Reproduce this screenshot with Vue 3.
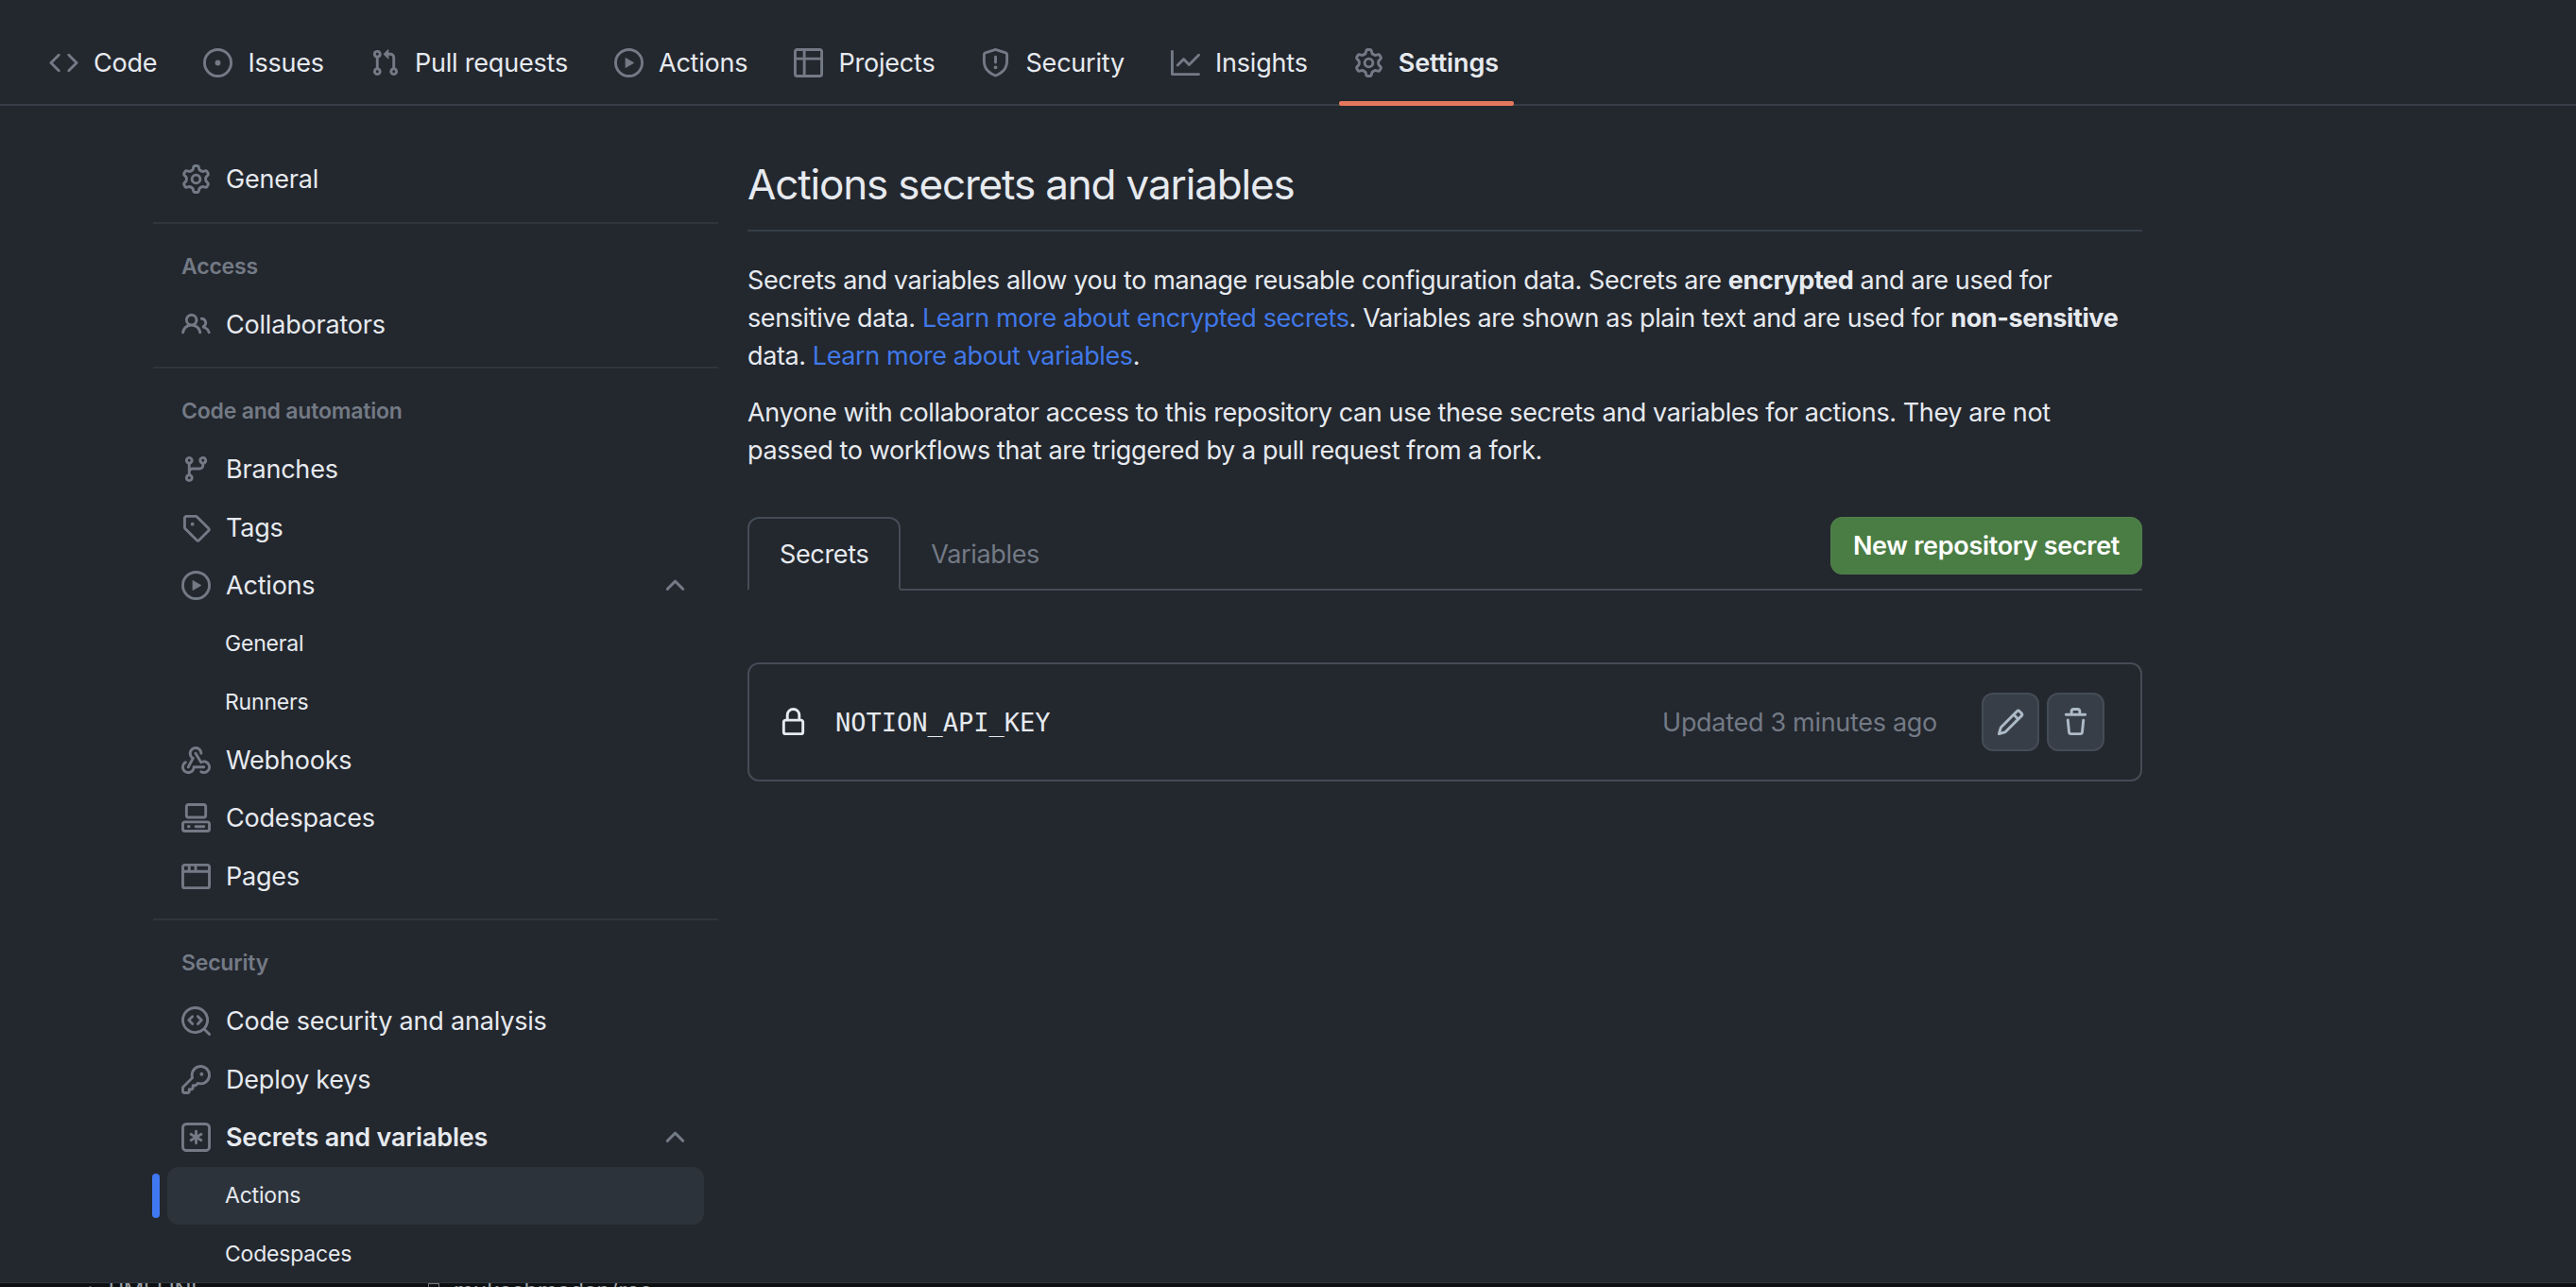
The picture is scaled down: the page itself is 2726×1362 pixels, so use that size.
<template>
  <div class="page">
    <nav class="topnav">
      <a v-for="tab in navTabs" :key="tab.label" class="nav-item" :class="{ selected: tab.selected }">
        <svg class="icon" viewBox="0 0 16 16"><path v-for="d in icons[tab.icon]" :key="d" :d="d" /></svg>
        <span>{{ tab.label }}</span>
      </a>
    </nav>

    <div class="body">
      <aside class="sidebar">
        <template v-for="(item, i) in sideItems" :key="i">
          <div v-if="item.type === 'divider'" class="side-divider"></div>
          <div v-else-if="item.type === 'heading'" class="side-heading">{{ item.label }}</div>
          <a v-else class="side-row" :class="{ sub: item.sub, active: item.active, strong: item.strong }">
            <svg v-if="item.icon" class="icon" viewBox="0 0 16 16"><path v-for="d in icons[item.icon]" :key="d" :d="d" /></svg>
            <span class="side-label">{{ item.label }}</span>
            <svg v-if="item.open" class="icon chevron" viewBox="0 0 16 16"><path :d="icons.chevron[0]" /></svg>
          </a>
        </template>
      </aside>

      <main class="content">
        <h1 class="title">Actions secrets and variables</h1>
        <p class="para first">
          Secrets and variables allow you to manage reusable configuration data. Secrets are <b>encrypted</b> and are used for
          sensitive data. <a class="link">Learn more about encrypted secrets</a>. Variables are shown as plain text and are used for <b>non-sensitive</b>
          data. <a class="link">Learn more about variables</a>.
        </p>
        <p class="para">
          Anyone with collaborator access to this repository can use these secrets and variables for actions. They are not
          passed to workflows that are triggered by a pull request from a fork.
        </p>

        <div class="tabs">
          <a class="tab current">Secrets</a>
          <a class="tab">Variables</a>
          <button class="new-btn">New repository secret</button>
        </div>

        <div class="secret-box">
          <svg class="icon lock" viewBox="0 0 16 16"><path :d="icons.lock[0]" /></svg>
          <code class="secret-name">NOTION_API_KEY</code>
          <span class="updated">Updated 3 minutes ago</span>
          <button class="icon-btn"><svg class="icon" viewBox="0 0 16 16"><path :d="icons.pencil[0]" /></svg></button>
          <button class="icon-btn"><svg class="icon" viewBox="0 0 16 16"><path :d="icons.trash[0]" /></svg></button>
        </div>
      </main>
    </div>

    <div class="peek">
      <span class="peek-left">&lt;</span>
      <span class="peek-title">TIMELINE</span>
      <span class="peek-box"></span>
      <span class="peek-right">mukeshmadan/ros</span>
    </div>
  </div>
</template>

<script setup>
const circle = 'M8 0a8 8 0 1 1 0 16A8 8 0 0 1 8 0ZM1.5 8a6.5 6.5 0 1 0 13 0 6.5 6.5 0 0 0-13 0Z'
const gear = 'M8 0a8.2 8.2 0 0 1 .701.031C9.444.095 9.99.645 10.16 1.29l.288 1.107c.018.066.079.158.212.224.231.114.454.243.668.386.123.082.233.09.299.071l1.103-.303c.644-.176 1.392.021 1.82.63.27.385.506.792.704 1.218.315.675.111 1.422-.364 1.891l-.814.806c-.049.048-.098.147-.088.294.016.257.016.515 0 .772-.01.147.038.246.088.294l.814.806c.475.469.679 1.216.364 1.891a7.977 7.977 0 0 1-.704 1.217c-.428.61-1.176.807-1.82.63l-1.102-.302c-.067-.019-.177-.011-.3.071a5.909 5.909 0 0 1-.668.386c-.133.066-.194.158-.211.224l-.29 1.106c-.168.646-.715 1.196-1.458 1.26a8.006 8.006 0 0 1-1.402 0c-.743-.064-1.289-.614-1.458-1.26l-.289-1.106c-.018-.066-.079-.158-.212-.224a5.738 5.738 0 0 1-.668-.386c-.123-.082-.233-.09-.299-.071l-1.103.303c-.644.176-1.392-.021-1.82-.63a8.12 8.12 0 0 1-.704-1.218c-.315-.675-.111-1.422.363-1.891l.815-.806c.05-.048.098-.147.088-.294a6.214 6.214 0 0 1 0-.772c.01-.147-.038-.246-.088-.294l-.815-.806C.635 6.045.431 5.298.746 4.623a7.92 7.92 0 0 1 .704-1.217c.428-.61 1.176-.807 1.82-.63l1.102.302c.067.019.177.011.3-.071.214-.143.437-.272.668-.386.133-.066.194-.158.211-.224l.29-1.106C6.009.645 6.556.095 7.299.03 7.53.01 7.764 0 8 0Zm-.571 1.525c-.036.003-.108.036-.137.146l-.289 1.105c-.147.561-.549.967-.998 1.189-.173.086-.34.183-.5.29-.417.278-.97.423-1.529.27l-1.103-.303c-.109-.03-.175.016-.195.045-.22.312-.412.644-.573.99-.014.031-.021.11.059.19l.815.806c.411.406.562.957.53 1.456a4.709 4.709 0 0 0 0 .582c.032.499-.119 1.05-.53 1.456l-.815.806c-.081.08-.073.159-.059.19.162.346.353.677.573.989.02.03.085.076.195.046l1.102-.303c.56-.153 1.113-.008 1.53.27.161.107.328.204.501.29.447.222.85.629.997 1.189l.289 1.105c.029.109.101.143.137.146a6.6 6.6 0 0 0 1.142 0c.036-.003.108-.036.137-.146l.289-1.105c.147-.561.549-.967.998-1.189.173-.086.34-.183.5-.29.417-.278.97-.423 1.529-.27l1.103.303c.109.029.175-.016.195-.045.22-.313.411-.644.573-.99.014-.031.021-.11-.059-.19l-.815-.806c-.411-.406-.562-.957-.53-1.456a4.709 4.709 0 0 0 0-.582c-.032-.499.119-1.05.53-1.456l.815-.806c.081-.08.073-.159.059-.19a6.464 6.464 0 0 0-.573-.989c-.02-.03-.085-.076-.195-.046l-1.102.303c-.56.153-1.113.008-1.53-.27a4.44 4.44 0 0 0-.501-.29c-.447-.222-.85-.629-.997-1.189l-.289-1.105c-.029-.11-.101-.143-.137-.146a6.6 6.6 0 0 0-1.142 0ZM11 8a3 3 0 1 1-6 0 3 3 0 0 1 6 0ZM9.5 8a1.5 1.5 0 1 0-3.001.001A1.5 1.5 0 0 0 9.5 8Z'
const play = 'M8 0a8 8 0 1 1 0 16A8 8 0 0 1 8 0ZM1.5 8a6.5 6.5 0 1 0 13 0 6.5 6.5 0 0 0-13 0Zm4.879-2.773 4.264 2.559a.25.25 0 0 1 0 .428l-4.264 2.559A.25.25 0 0 1 6 10.559V5.442a.25.25 0 0 1 .379-.215Z'

const icons = {
  code: ['m11.28 3.22 4.25 4.25a.75.75 0 0 1 0 1.06l-4.25 4.25a.749.749 0 0 1-1.275-.326.749.749 0 0 1 .215-.734L13.94 8l-3.72-3.72a.749.749 0 0 1 .326-1.275.749.749 0 0 1 .734.215Zm-6.56 0a.751.751 0 0 1 1.042.018.751.751 0 0 1 .018 1.042L2.06 8l3.72 3.72a.749.749 0 0 1-.326 1.275.749.749 0 0 1-.734-.215L.47 8.53a.75.75 0 0 1 0-1.06Z'],
  issue: ['M8 9.5a1.5 1.5 0 1 0 0-3 1.5 1.5 0 0 0 0 3Z', circle],
  pull: ['M1.5 3.25a2.25 2.25 0 1 1 3 2.122v5.256a2.251 2.251 0 1 1-1.5 0V5.372A2.25 2.25 0 0 1 1.5 3.25Zm5.677-.177L9.573.677A.25.25 0 0 1 10 .854V2.5h1A2.5 2.5 0 0 1 13.5 5v5.628a2.251 2.251 0 1 1-1.5 0V5a1 1 0 0 0-1-1h-1v1.646a.25.25 0 0 1-.427.177L7.177 3.427a.25.25 0 0 1 0-.354ZM3.75 2.5a.75.75 0 1 0 0 1.5.75.75 0 0 0 0-1.5Zm0 9.5a.75.75 0 1 0 0 1.5.75.75 0 0 0 0-1.5Zm8.25.75a.75.75 0 1 0 1.5 0 .75.75 0 0 0-1.5 0Z'],
  play: [play],
  table: ['M0 1.75C0 .784.784 0 1.75 0h12.5C15.216 0 16 .784 16 1.75v12.5A1.75 1.75 0 0 1 14.25 16H1.75A1.75 1.75 0 0 1 0 14.25ZM6.5 6.5v8h7.75a.25.25 0 0 0 .25-.25V6.5Zm8-1.5V1.75a.25.25 0 0 0-.25-.25H6.5V5Zm-13 1.5v7.75c0 .138.112.25.25.25H5v-8ZM5 5V1.5H1.75a.25.25 0 0 0-.25.25V5Z'],
  shield: ['M7.467.133a1.748 1.748 0 0 1 1.066 0l5.25 1.68A1.75 1.75 0 0 1 15 3.48V7c0 1.566-.32 3.182-1.303 4.682-.983 1.498-2.585 2.813-5.032 3.855a1.697 1.697 0 0 1-1.33 0c-2.447-1.042-4.049-2.357-5.032-3.855C1.32 10.182 1 8.566 1 7V3.48a1.75 1.75 0 0 1 1.217-1.667Zm.61 1.429a.25.25 0 0 0-.153 0l-5.25 1.68a.25.25 0 0 0-.174.238V7c0 1.358.275 2.666 1.057 3.86.784 1.194 2.121 2.34 4.366 3.297a.196.196 0 0 0 .154 0c2.245-.956 3.582-2.104 4.366-3.298C13.225 9.666 13.5 8.36 13.5 7V3.48a.251.251 0 0 0-.174-.237l-5.25-1.68ZM8.75 4.75v3a.75.75 0 0 1-1.5 0v-3a.75.75 0 0 1 1.5 0ZM9 10.5a1 1 0 1 1-2 0 1 1 0 0 1 2 0Z'],
  graph: ['M1.5 1.75V13.5h13.75a.75.75 0 0 1 0 1.5H.75a.75.75 0 0 1-.75-.75V1.75a.75.75 0 0 1 1.5 0Zm14.28 2.53-5.25 5.25a.75.75 0 0 1-1.06 0L7 7.06 4.28 9.78a.751.751 0 0 1-1.042-.018.751.751 0 0 1-.018-1.042l3.25-3.25a.75.75 0 0 1 1.06 0L10 7.94l4.72-4.72a.751.751 0 0 1 1.042.018.751.751 0 0 1 .018 1.042Z'],
  gear: [gear],
  people: ['M2 5.5a3.5 3.5 0 1 1 5.898 2.549 5.508 5.508 0 0 1 3.034 4.084.75.75 0 1 1-1.482.235 4 4 0 0 0-7.9 0 .75.75 0 0 1-1.482-.236A5.507 5.507 0 0 1 3.102 8.05 3.493 3.493 0 0 1 2 5.5ZM11 4a3.001 3.001 0 0 1 2.22 5.018 5.01 5.01 0 0 1 2.56 3.012.749.749 0 0 1-.885.954.752.752 0 0 1-.549-.514 3.507 3.507 0 0 0-2.522-2.372.75.75 0 0 1-.574-.73v-.352a.75.75 0 0 1 .416-.672A1.5 1.5 0 0 0 11 5.5.75.75 0 0 1 11 4Zm-5.5-.5a2 2 0 1 0-.001 3.999A2 2 0 0 0 5.5 3.5Z'],
  branch: ['M9.5 3.25a2.25 2.25 0 1 1 3 2.122V6A2.5 2.5 0 0 1 10 8.5H6a1 1 0 0 0-1 1v1.128a2.251 2.251 0 1 1-1.5 0V5.372a2.25 2.25 0 1 1 1.5 0v1.836A2.493 2.493 0 0 1 6 7h4a1 1 0 0 0 1-1v-.628A2.25 2.25 0 0 1 9.5 3.25Zm-6 0a.75.75 0 1 0 1.5 0 .75.75 0 0 0-1.5 0Zm8.25-.75a.75.75 0 1 0 0 1.5.75.75 0 0 0 0-1.5ZM4.25 12a.75.75 0 1 0 0 1.5.75.75 0 0 0 0-1.5Z'],
  tag: ['M1 7.775V2.75C1 1.784 1.784 1 2.75 1h5.025c.464 0 .91.184 1.238.513l6.25 6.25a1.75 1.75 0 0 1 0 2.474l-5.026 5.026a1.75 1.75 0 0 1-2.474 0l-6.25-6.25A1.75 1.75 0 0 1 1 7.775Zm1.5 0c0 .066.026.13.073.177l6.25 6.25a.25.25 0 0 0 .354 0l5.025-5.025a.25.25 0 0 0 0-.354l-6.25-6.25a.25.25 0 0 0-.177-.073H2.75a.25.25 0 0 0-.25.25ZM6 5a1 1 0 1 1 0 2 1 1 0 0 1 0-2Z'],
  webhook: [
    'M5.5 4.25a2.25 2.25 0 0 1 4.5 0 .75.75 0 0 0 1.5 0 3.75 3.75 0 1 0-6.14 2.889l-2.272 4.258a.75.75 0 0 0 1.324.706L7 7.25a.75.75 0 0 0-.309-1.015A2.25 2.25 0 0 1 5.5 4.25Z',
    'M7.364 3.607a.75.75 0 0 1 1.03.257l2.608 4.349a3.75 3.75 0 1 1-.628 6.785.75.75 0 0 1 .752-1.299 2.25 2.25 0 1 0-.033-3.88.75.75 0 0 1-1.03-.256L7.107 4.636a.75.75 0 0 1 .257-1.03Z',
    'M2.9 8.776A.75.75 0 0 1 2.625 9.8 2.25 2.25 0 1 0 6 11.75a.75.75 0 0 1 .75-.751h5.5a.75.75 0 0 1 0 1.5H7.425a3.751 3.751 0 1 1-5.55-3.998.75.75 0 0 1 1.024.274Z'
  ],
  codespaces: [
    'M0 11.25c0-.966.784-1.75 1.75-1.75h12.5c.966 0 1.75.784 1.75 1.75v3A1.75 1.75 0 0 1 14.25 16H1.75A1.75 1.75 0 0 1 0 14.25Zm2-9.5C2 .784 2.784 0 3.75 0h8.5C13.216 0 14 .784 14 1.75v5a1.75 1.75 0 0 1-1.75 1.75h-8.5A1.75 1.75 0 0 1 2 6.75Zm1.75-.25a.25.25 0 0 0-.25.25v5c0 .138.112.25.25.25h8.5a.25.25 0 0 0 .25-.25v-5a.25.25 0 0 0-.25-.25Zm-2 9.5a.25.25 0 0 0-.25.25v3c0 .138.112.25.25.25h12.5a.25.25 0 0 0 .25-.25v-3a.25.25 0 0 0-.25-.25Z',
    'M7 12.75a.75.75 0 0 1 .75-.75h4.5a.75.75 0 0 1 0 1.5h-4.5a.75.75 0 0 1-.75-.75Zm-4 0a.75.75 0 0 1 .75-.75h.5a.75.75 0 0 1 0 1.5h-.5a.75.75 0 0 1-.75-.75Z'
  ],
  browser: ['M0 2.75C0 1.784.784 1 1.75 1h12.5c.966 0 1.75.784 1.75 1.75v10.5A1.75 1.75 0 0 1 14.25 15H1.75A1.75 1.75 0 0 1 0 13.25ZM14.5 6h-13v7.25c0 .138.112.25.25.25h12.5a.25.25 0 0 0 .25-.25Zm-6-3.5v2h6V2.75a.25.25 0 0 0-.25-.25ZM5 2.5v2h2v-2Zm-3.25 0a.25.25 0 0 0-.25.25V4.5h2v-2Z'],
  codescan: [
    'M8.47 4.97a.75.75 0 0 0 0 1.06L9.94 7.5 8.47 8.97a.75.75 0 1 0 1.06 1.06l2-2a.75.75 0 0 0 0-1.06l-2-2a.75.75 0 0 0-1.06 0ZM6.53 6.03a.75.75 0 0 0-1.06-1.06l-2 2a.75.75 0 0 0 0 1.06l2 2a.75.75 0 1 0 1.06-1.06L5.06 7.5l1.47-1.47Z',
    'M12.246 13.307a7.501 7.501 0 1 1 1.06-1.06l2.474 2.473a.749.749 0 0 1-.326 1.275.749.749 0 0 1-.734-.215ZM1.5 7.5a6.002 6.002 0 0 0 3.608 5.504 6.002 6.002 0 0 0 6.486-1.117.748.748 0 0 1 .292-.293A6 6 0 1 0 1.5 7.5Z'
  ],
  key: ['M10.5 0a5.499 5.499 0 1 1-1.288 10.848l-.932.932a.749.749 0 0 1-.53.22H7v.75a.749.749 0 0 1-.22.53l-.5.5a.749.749 0 0 1-.53.22H5v.75a.749.749 0 0 1-.22.53l-.5.5a.749.749 0 0 1-.53.22h-2A1.75 1.75 0 0 1 0 14.25v-2c0-.199.079-.389.22-.53l4.932-4.932A5.5 5.5 0 0 1 10.5 0Zm-4 5.5c-.001.431.069.86.205 1.269a.75.75 0 0 1-.181.768L1.5 12.56v1.69c0 .138.112.25.25.25h1.69l.06-.06v-1.19a.75.75 0 0 1 .75-.75h1.19l.06-.06v-1.19a.75.75 0 0 1 .75-.75h1.19l1.023-1.025a.75.75 0 0 1 .768-.18A4 4 0 1 0 6.5 5.5ZM11 6a1 1 0 1 1 0-2 1 1 0 0 1 0 2Z'],
  asterisk: [
    'M0 2.75A2.75 2.75 0 0 1 2.75 0h10.5A2.75 2.75 0 0 1 16 2.75v10.5A2.75 2.75 0 0 1 13.25 16H2.75A2.75 2.75 0 0 1 0 13.25ZM2.75 1.5c-.69 0-1.25.56-1.25 1.25v10.5c0 .69.56 1.25 1.25 1.25h10.5c.69 0 1.25-.56 1.25-1.25V2.75c0-.69-.56-1.25-1.25-1.25Z',
    'M8 4a.75.75 0 0 1 .75.75V6.7l1.69-.975a.75.75 0 0 1 .75 1.3L9.5 8l1.69.976a.75.75 0 0 1-.75 1.298L8.75 9.3v1.951a.75.75 0 0 1-1.5 0V9.299l-1.69.976a.75.75 0 0 1-.75-1.3L6.5 8l-1.69-.975a.75.75 0 0 1 .75-1.3l1.69.976V4.75A.75.75 0 0 1 8 4Z'
  ],
  chevron: ['M3.22 10.53a.749.749 0 0 1 0-1.06l4.25-4.25a.749.749 0 0 1 1.06 0l4.25 4.25a.749.749 0 0 1-.326 1.275.749.749 0 0 1-.734-.215L8 6.811 4.28 10.53a.749.749 0 0 1-1.06 0Z'],
  lock: ['M4 4a4 4 0 0 1 8 0v2h.25c.966 0 1.75.784 1.75 1.75v5.5A1.75 1.75 0 0 1 12.25 15h-8.5A1.75 1.75 0 0 1 2 13.25v-5.5C2 6.784 2.784 6 3.75 6H4Zm8.25 3.5h-8.5a.25.25 0 0 0-.25.25v5.5c0 .138.112.25.25.25h8.5a.25.25 0 0 0 .25-.25v-5.5a.25.25 0 0 0-.25-.25ZM10.5 6V4a2.5 2.5 0 1 0-5 0v2Z'],
  pencil: ['M11.013 1.427a1.75 1.75 0 0 1 2.474 0l1.086 1.086a1.75 1.75 0 0 1 0 2.474l-8.61 8.61c-.21.21-.47.364-.756.445l-3.251.93a.75.75 0 0 1-.927-.928l.929-3.25c.081-.286.235-.547.445-.758l8.61-8.61Zm.176 4.823L9.75 4.81l-6.286 6.287a.253.253 0 0 0-.064.108l-.558 1.953 1.953-.558a.253.253 0 0 0 .108-.064Zm1.238-3.763a.25.25 0 0 0-.354 0L10.811 3.75l1.439 1.44 1.263-1.263a.25.25 0 0 0 0-.354Z'],
  trash: ['M11 1.75V3h2.25a.75.75 0 0 1 0 1.5H2.75a.75.75 0 0 1 0-1.5H5V1.75C5 .784 5.784 0 6.75 0h2.5C10.216 0 11 .784 11 1.75ZM4.496 6.675l.66 6.6a.25.25 0 0 0 .249.225h5.19a.25.25 0 0 0 .249-.225l.66-6.6a.75.75 0 0 1 1.492.149l-.66 6.6A1.748 1.748 0 0 1 10.595 15h-5.19a1.75 1.75 0 0 1-1.741-1.575l-.66-6.6a.75.75 0 1 1 1.492-.15ZM6.5 1.75V3h3V1.75a.25.25 0 0 0-.25-.25h-2.5a.25.25 0 0 0-.25.25Z']
}

const navTabs = [
  { label: 'Code', icon: 'code' },
  { label: 'Issues', icon: 'issue' },
  { label: 'Pull requests', icon: 'pull' },
  { label: 'Actions', icon: 'play' },
  { label: 'Projects', icon: 'table' },
  { label: 'Security', icon: 'shield' },
  { label: 'Insights', icon: 'graph' },
  { label: 'Settings', icon: 'gear', selected: true }
]

const sideItems = [
  { label: 'General', icon: 'gear' },
  { type: 'divider' },
  { type: 'heading', label: 'Access' },
  { label: 'Collaborators', icon: 'people' },
  { type: 'divider' },
  { type: 'heading', label: 'Code and automation' },
  { label: 'Branches', icon: 'branch' },
  { label: 'Tags', icon: 'tag' },
  { label: 'Actions', icon: 'play', open: true },
  { label: 'General', sub: true },
  { label: 'Runners', sub: true },
  { label: 'Webhooks', icon: 'webhook' },
  { label: 'Codespaces', icon: 'codespaces' },
  { label: 'Pages', icon: 'browser' },
  { type: 'divider' },
  { type: 'heading', label: 'Security' },
  { label: 'Code security and analysis', icon: 'codescan' },
  { label: 'Deploy keys', icon: 'key' },
  { label: 'Secrets and variables', icon: 'asterisk', open: true, strong: true },
  { label: 'Actions', sub: true, active: true },
  { label: 'Codespaces', sub: true }
]
</script>

<style>
html,
body {
  margin: 0;
  background: #23272e;
  overflow: hidden;
}
</style>

<style scoped>
.page {
  height: 1362px;
  display: flex;
  flex-direction: column;
  overflow: hidden;
  background: #23272e;
  color: #e6eaef;
  font-family: Inter, "Liberation Sans", sans-serif;
  font-size: 27px;
  letter-spacing: -0.2px;
}

.icon {
  width: 31px;
  height: 31px;
  flex: none;
  fill: #737a85;
}

.topnav {
  height: 110px;
  flex: none;
  display: flex;
  gap: 17px;
  padding-left: 36px;
  border-bottom: 2px solid #373e47;
}

.nav-item {
  position: relative;
  display: flex;
  align-items: center;
  gap: 16px;
  padding: 22px 16px 0;
}

.nav-item.selected {
  font-weight: 600;
  letter-spacing: -0.1px;
}

.nav-item.selected::after {
  content: "";
  position: absolute;
  left: 0;
  right: 0;
  bottom: -2px;
  height: 5px;
  border-radius: 2px;
  background: #e5775c;
}

.body {
  flex: 1;
  min-height: 0;
  display: flex;
  padding-left: 162px;
}

.sidebar {
  width: 598px;
  flex: none;
  padding-top: 47px;
  margin-right: 31px;
}

.side-divider {
  height: 2px;
  margin: 14px 0;
  background: #2f353d;
}

.side-heading {
  padding: 15px 0 0 30px;
  height: 47px;
  line-height: 32px;
  font-size: 23px;
  font-weight: 600;
  color: #737a85;
}

.side-row {
  position: relative;
  height: 61.5px;
  display: flex;
  align-items: center;
  gap: 16px;
  margin: 0 15px;
  padding: 0 15px;
  border-radius: 12px;
}

.side-row.sub {
  padding-left: 61px;
  font-size: 23px;
}

.side-row.strong {
  font-weight: 600;
}

.side-row.active {
  background: #2d333b;
}

.side-row.active::before {
  content: "";
  position: absolute;
  left: -16px;
  top: 7px;
  bottom: 7px;
  width: 8px;
  border-radius: 4px;
  background: #4078f2;
}

.side-label {
  flex: 1;
}

.content {
  width: 1476px;
  flex: none;
}

.title {
  margin: 0;
  height: 133px;
  box-sizing: border-box;
  padding-top: 52px;
  line-height: 62px;
  font-size: 44px;
  font-weight: 400;
  letter-spacing: -1.15px;
  border-bottom: 2px solid #373e47;
}

.para {
  margin: 0 0 20px;
  line-height: 40px;
  letter-spacing: -0.4px;
}

.para.first {
  margin-top: 32px;
}

.link {
  color: #4078e8;
}

.tabs {
  display: flex;
  align-items: flex-end;
  height: 76px;
  margin-top: 50px;
  border-bottom: 2px solid #444c56;
}

.tab {
  height: 78px;
  box-sizing: border-box;
  display: flex;
  align-items: center;
  padding: 0 32px;
  color: #737a85;
  margin-bottom: -2px;
  letter-spacing: -0.35px;
}

.tab.current {
  border: 2px solid #444c56;
  border-bottom-color: #23272e;
  border-radius: 12px 12px 0 0;
  color: #e6eaef;
}

.new-btn {
  margin-left: auto;
  align-self: flex-start;
  width: 330px;
  height: 61px;
  padding: 0;
  border: 1px solid #527f4c;
  border-radius: 12px;
  background: #4a7d44;
  color: #fff;
  font: 600 27px Inter, "Liberation Sans", sans-serif;
  letter-spacing: -0.3px;
}

.secret-box {
  display: flex;
  align-items: center;
  height: 126px;
  box-sizing: border-box;
  margin-top: 76px;
  padding: 0 38px 0 31px;
  border: 2px solid #444c56;
  border-radius: 12px;
}

.lock {
  fill: #e6eaef;
}

.secret-name {
  margin-left: 29px;
  flex: 1;
  font-family: "DejaVu Sans Mono", monospace;
  font-size: 27px;
  letter-spacing: 0;
}

.updated {
  color: #737a85;
  margin-right: 39px;
  letter-spacing: -0.3px;
}

.icon-btn {
  width: 61px;
  height: 62px;
  margin-left: 8px;
  padding: 0;
  display: flex;
  align-items: center;
  justify-content: center;
  border: 2px solid #444c56;
  border-radius: 12px;
  background: #373e47;
}

.icon-btn .icon {
  fill: #adbac7;
}

.peek {
  height: 4px;
  flex: none;
  display: flex;
  overflow: hidden;
  background: #0d1013;
  border-top: 1px solid #33383f;
  font-size: 24px;
  line-height: 16px;
  letter-spacing: 0;
  color: #9aa0a6;
  white-space: pre;
}

.peek-left {
  margin-left: 83px;
  width: 27px;
}

.peek-title {
  width: 343px;
  letter-spacing: -0.6px;
}

.peek-box {
  width: 12px;
  height: 8px;
  box-sizing: border-box;
  border: 1px solid #777;
  margin-right: 15px;
}
</style>
